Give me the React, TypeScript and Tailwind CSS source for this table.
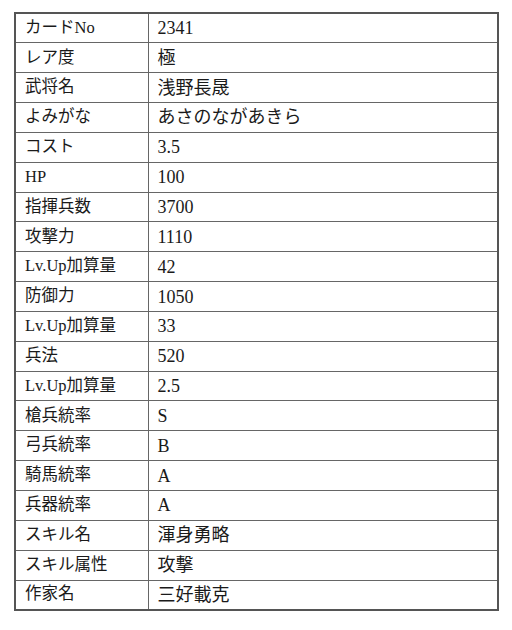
const rows: [string, string][] = [
  ["カードNo", "2341"],
  ["レア度", "極"],
  ["武将名", "浅野長晟"],
  ["よみがな", "あさのながあきら"],
  ["コスト", "3.5"],
  ["HP", "100"],
  ["指揮兵数", "3700"],
  ["攻撃力", "1110"],
  ["Lv.Up加算量", "42"],
  ["防御力", "1050"],
  ["Lv.Up加算量", "33"],
  ["兵法", "520"],
  ["Lv.Up加算量", "2.5"],
  ["槍兵統率", "S"],
  ["弓兵統率", "B"],
  ["騎馬統率", "A"],
  ["兵器統率", "A"],
  ["スキル名", "渾身勇略"],
  ["スキル属性", "攻撃"],
  ["作家名", "三好載克"],
];

export default function App() {
  return (
    <div
      className="w-[512px] h-[630px] bg-white pt-[12px] pl-[14px]"
      style={{ fontFamily: '"Liberation Serif", "Noto Sans CJK JP", serif' }}
    >
      <table className="w-[485px] border-collapse border-2 border-[#555] text-[#1a1a1a]">
        <tbody>
          {rows.map(([label, value], i) => (
            <tr key={i} className="h-[29.85px]">
              <td className="w-[133px] border border-[#666] px-[9px] py-0 text-[16.5px] leading-none">
                {label}
              </td>
              <td className="border border-[#666] px-[9px] py-0 text-[18px] leading-none">
                {value}
              </td>
            </tr>
          ))}
        </tbody>
      </table>
    </div>
  );
}
